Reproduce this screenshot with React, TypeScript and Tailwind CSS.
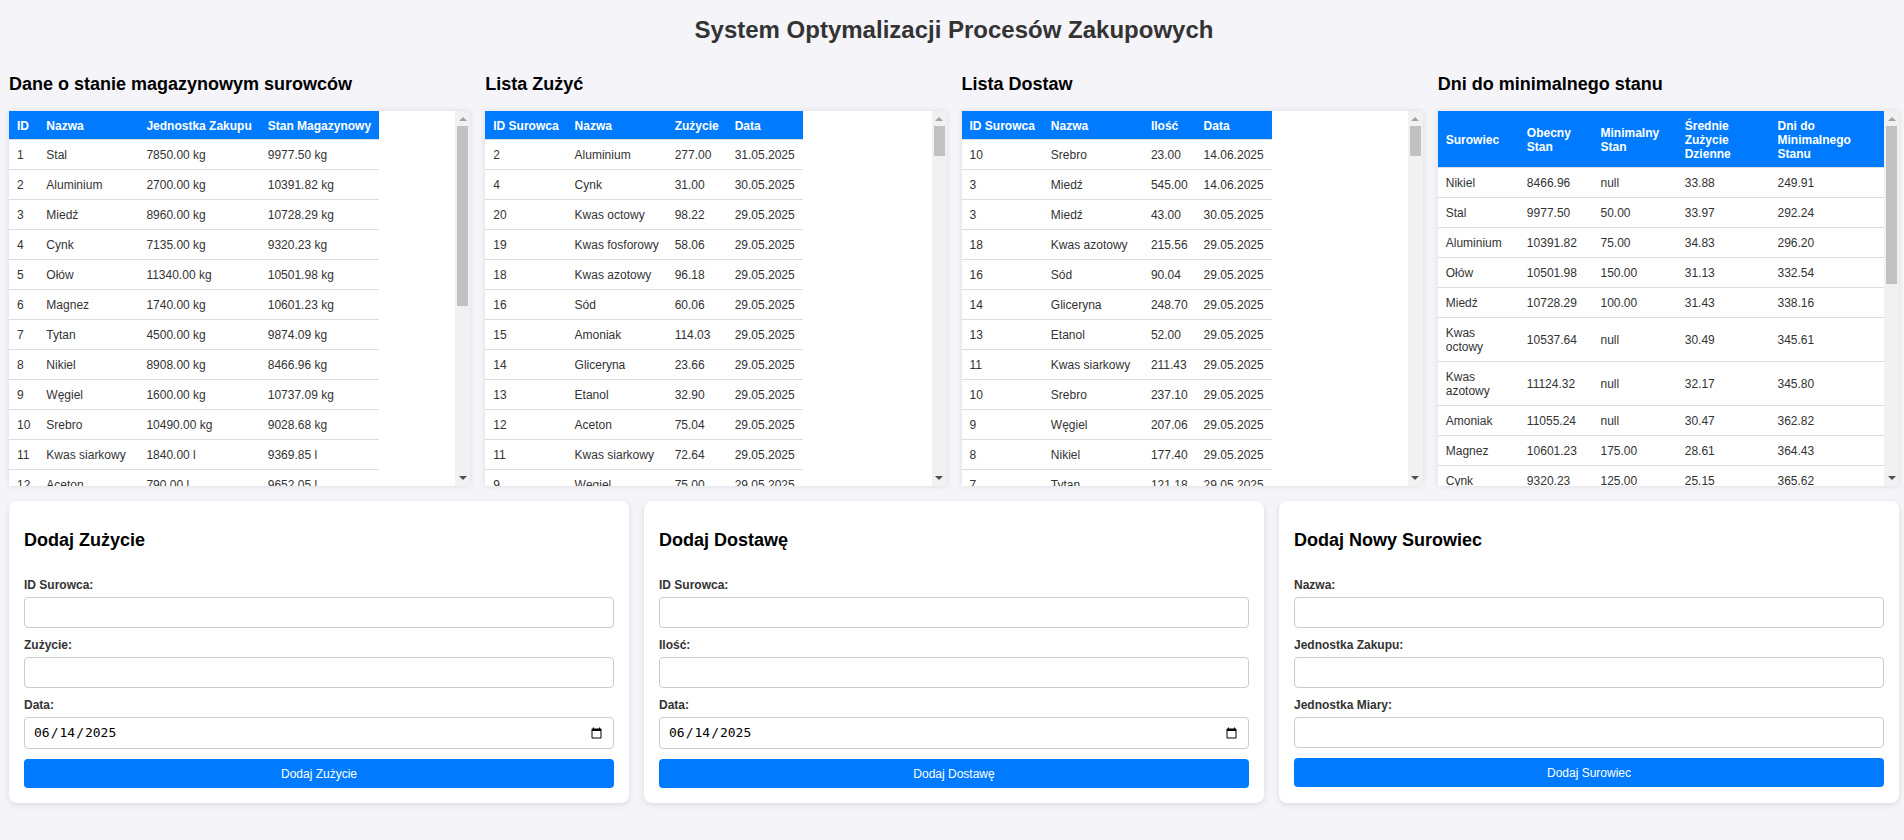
import React from "react";

const materials: [number, string, string, string][] = [
  [1, "Stal", "7850.00 kg", "9977.50 kg"],
  [2, "Aluminium", "2700.00 kg", "10391.82 kg"],
  [3, "Miedź", "8960.00 kg", "10728.29 kg"],
  [4, "Cynk", "7135.00 kg", "9320.23 kg"],
  [5, "Ołów", "11340.00 kg", "10501.98 kg"],
  [6, "Magnez", "1740.00 kg", "10601.23 kg"],
  [7, "Tytan", "4500.00 kg", "9874.09 kg"],
  [8, "Nikiel", "8908.00 kg", "8466.96 kg"],
  [9, "Węgiel", "1600.00 kg", "10737.09 kg"],
  [10, "Srebro", "10490.00 kg", "9028.68 kg"],
  [11, "Kwas siarkowy", "1840.00 l", "9369.85 l"],
  [12, "Aceton", "790.00 l", "9652.05 l"],
  [13, "Etanol", "789.00 l", "10112.40 l"],
  [14, "Gliceryna", "1260.00 l", "9958.31 l"],
  [15, "Amoniak", "682.00 l", "11055.24 l"],
  [16, "Sód", "968.00 kg", "9807.66 kg"],
  [17, "Potas", "862.00 kg", "9712.35 kg"],
  [18, "Kwas azotowy", "1510.00 l", "11124.32 l"],
  [19, "Kwas fosforowy", "1880.00 l", "10233.19 l"],
  [20, "Kwas octowy", "1050.00 l", "10537.64 l"],
  [21, "Siarka", "2070.00 kg", "9540.12 kg"],
  [22, "Fosfor", "1820.00 kg", "9911.08 kg"],
  [23, "Chlor", "3210.00 kg", "10021.44 kg"],
];

const nameOf = (id: number) => materials[id - 1][1];

const fmtDate = (d: Date) =>
  `${String(d.getDate()).padStart(2, "0")}.${String(d.getMonth() + 1).padStart(2, "0")}.${d.getFullYear()}`;

const zuzyciaVisible: [number, string, string][] = [
  [2, "277.00", "31.05.2025"],
  [4, "31.00", "30.05.2025"],
  [20, "98.22", "29.05.2025"],
  [19, "58.06", "29.05.2025"],
  [18, "96.18", "29.05.2025"],
  [16, "60.06", "29.05.2025"],
  [15, "114.03", "29.05.2025"],
  [14, "23.66", "29.05.2025"],
  [13, "32.90", "29.05.2025"],
  [12, "75.04", "29.05.2025"],
  [11, "72.64", "29.05.2025"],
  [9, "75.00", "29.05.2025"],
];

const dostawyVisible: [number, string, string][] = [
  [10, "23.00", "14.06.2025"],
  [3, "545.00", "14.06.2025"],
  [3, "43.00", "30.05.2025"],
  [18, "215.56", "29.05.2025"],
  [16, "90.04", "29.05.2025"],
  [14, "248.70", "29.05.2025"],
  [13, "52.00", "29.05.2025"],
  [11, "211.43", "29.05.2025"],
  [10, "237.10", "29.05.2025"],
  [9, "207.06", "29.05.2025"],
  [8, "177.40", "29.05.2025"],
  [7, "121.18", "29.05.2025"],
];

function gen(
  visible: [number, string, string][],
  count: number,
  mult: number,
  range: number
): [number, string, string, string][] {
  const out: [number, string, string, string][] = visible.map(([id, v, d]) => [id, nameOf(id), v, d]);
  for (let i = 0; i < count; i++) {
    const id = ((i * 7) % 23) + 1;
    const val = (10 + ((i * mult) % range)).toFixed(2);
    const d = new Date(2025, 4, 28 - Math.floor(i / 6));
    out.push([id, nameOf(id), val, fmtDate(d)]);
  }
  return out;
}

const zuzycia = gen(zuzyciaVisible, 128, 47.37, 110);
const dostawy = gen(dostawyVisible, 128, 83.91, 280);

const dni: [string, string, string, string, string][] = [
  ["Nikiel", "8466.96", "null", "33.88", "249.91"],
  ["Stal", "9977.50", "50.00", "33.97", "292.24"],
  ["Aluminium", "10391.82", "75.00", "34.83", "296.20"],
  ["Ołów", "10501.98", "150.00", "31.13", "332.54"],
  ["Miedź", "10728.29", "100.00", "31.43", "338.16"],
  ["Kwas octowy", "10537.64", "null", "30.49", "345.61"],
  ["Kwas azotowy", "11124.32", "null", "32.17", "345.80"],
  ["Amoniak", "11055.24", "null", "30.47", "362.82"],
  ["Magnez", "10601.23", "175.00", "28.61", "364.43"],
  ["Cynk", "9320.23", "125.00", "25.15", "365.62"],
  ["Tytan", "9874.09", "null", "26.71", "369.68"],
  ["Srebro", "9028.68", "null", "24.21", "372.93"],
  ["Kwas siarkowy", "9369.85", "null", "24.87", "376.75"],
  ["Węgiel", "10737.09", "null", "28.06", "382.65"],
  ["Aceton", "9652.05", "null", "24.93", "387.17"],
  ["Etanol", "10112.40", "null", "25.74", "392.87"],
  ["Gliceryna", "9958.31", "null", "24.86", "400.58"],
  ["Sód", "9807.66", "null", "23.97", "409.16"],
  ["Potas", "9712.35", "null", "22.84", "425.23"],
  ["Kwas fosforowy", "10233.19", "null", "23.61", "433.42"],
  ["Siarka", "9540.12", "null", "21.37", "446.43"],
  ["Fosfor", "9911.08", "null", "20.95", "473.08"],
  ["Chlor", "10021.44", "null", "19.82", "505.63"],
];

function DataTable({ headers, rows, full }: { headers: string[]; rows: (string | number)[][]; full?: boolean }) {
  return (
    <table className={`border-separate border-spacing-0 text-[12px] ${full ? "w-full" : ""}`}>
      <thead>
        <tr>
          {headers.map((h) => (
            <th
              key={h}
              className="bg-[#007bff] text-white font-bold text-left align-middle px-2 pt-2 pb-[6px] leading-[14px] border-b border-[#ddd]"
            >
              {h}
            </th>
          ))}
        </tr>
      </thead>
      <tbody>
        {rows.map((r, i) => (
          <tr key={i}>
            {r.map((c, j) => (
              <td
                key={j}
                className="text-[#333] text-left align-middle px-2 pt-2 pb-[7px] leading-[14px] border-b border-[#ddd]"
              >
                {c}
              </td>
            ))}
          </tr>
        ))}
      </tbody>
    </table>
  );
}

function Scrollbar({ thumbCls }: { thumbCls: string }) {
  return (
    <div className="w-[15px] shrink-0 bg-[#f1f1f1] flex flex-col">
      <div className="h-[15px] flex items-start justify-center pt-[6px]">
        <svg width="8" height="4" viewBox="0 0 8 4">
          <polygon points="0,4 4,0 8,4" fill="#a3a3a3" />
        </svg>
      </div>
      <div className="flex-1 px-[2px]">
        <div className={`bg-[#c1c1c1] ${thumbCls}`} />
      </div>
      <div className="h-[15px] flex items-start justify-center pt-[5px]">
        <svg width="8" height="4" viewBox="0 0 8 4">
          <polygon points="0,0 8,0 4,4" fill="#505050" />
        </svg>
      </div>
    </div>
  );
}

function Section({ title, thumbCls, children }: { title: string; thumbCls: string; children: React.ReactNode }) {
  return (
    <div className="min-w-0">
      <h2 className="text-[18px] font-bold leading-[21px] text-black mb-[16px] whitespace-nowrap">{title}</h2>
      <div className="h-[375px] bg-white shadow-[0_0_6px_rgba(0,0,0,0.1)] flex">
        <div className="flex-1 min-w-0 overflow-hidden">{children}</div>
        <Scrollbar thumbCls={thumbCls} />
      </div>
    </div>
  );
}

function Field({ label, type = "text" }: { label: string; type?: string }) {
  return (
    <div className="mb-[10px]">
      <label className="block text-[12px] font-bold leading-[14px] text-[#333] mb-[5px]">{label}</label>
      {type === "date" ? (
        <input
          type="date"
          defaultValue="2025-06-14"
          className="block w-full h-[32px] px-2 border border-[#ccc] rounded-[4px] bg-white text-black text-[13px] font-['DejaVu_Sans_Mono',monospace]"
        />
      ) : (
        <input
          type="text"
          className="block w-full h-[31px] px-2 border border-[#ccc] rounded-[4px] bg-white text-black text-[12px]"
        />
      )}
    </div>
  );
}

function Card({ title, fields, button }: { title: string; fields: [string, string?][]; button: string }) {
  return (
    <div className="bg-white rounded-[8px] shadow-[0_2px_6px_rgba(0,0,0,0.1)] px-[15px] pt-[29px] pb-[15px]">
      <h2 className="text-[18px] font-bold leading-[21px] text-black mb-[27px]">{title}</h2>
      {fields.map(([l, t]) => (
        <Field key={l} label={l} type={t} />
      ))}
      <button className="mt-[3px] block w-full h-[29px] rounded-[4px] bg-[#007bff] text-white text-[12px] leading-[14px]">
        {button}
      </button>
    </div>
  );
}

export default function App() {
  return (
    <div className="min-h-screen bg-[#f4f4f9] font-['Liberation_Sans',Arial,sans-serif] text-[12px] text-[#333] pl-[9px] pr-[5px]">
      <h1 className="pt-[16px] text-center text-[24px] font-bold leading-[28px] text-[#333]">
        System Optymalizacji Procesów Zakupowych
      </h1>
      <div className="grid grid-cols-4 gap-[15px] mt-[30px]">
        <Section title="Dane o stanie magazynowym surowców" thumbCls="h-[180px]">
          <DataTable headers={["ID", "Nazwa", "Jednostka Zakupu", "Stan Magazynowy"]} rows={materials} />
        </Section>
        <Section title="Lista Zużyć" thumbCls="h-[30px]">
          <DataTable headers={["ID Surowca", "Nazwa", "Zużycie", "Data"]} rows={zuzycia} />
        </Section>
        <Section title="Lista Dostaw" thumbCls="h-[30px]">
          <DataTable headers={["ID Surowca", "Nazwa", "Ilość", "Data"]} rows={dostawy} />
        </Section>
        <Section title="Dni do minimalnego stanu" thumbCls="h-[158px]">
          <DataTable
            full
            headers={["Surowiec", "Obecny Stan", "Minimalny Stan", "Średnie Zużycie Dzienne", "Dni do Minimalnego Stanu"]}
            rows={dni}
          />
        </Section>
      </div>
      <div className="grid grid-cols-3 gap-[15px] mt-[15px]">
        <Card
          title="Dodaj Zużycie"
          fields={[["ID Surowca:"], ["Zużycie:"], ["Data:", "date"]]}
          button="Dodaj Zużycie"
        />
        <Card
          title="Dodaj Dostawę"
          fields={[["ID Surowca:"], ["Ilość:"], ["Data:", "date"]]}
          button="Dodaj Dostawę"
        />
        <Card
          title="Dodaj Nowy Surowiec"
          fields={[["Nazwa:"], ["Jednostka Zakupu:"], ["Jednostka Miary:"]]}
          button="Dodaj Surowiec"
        />
      </div>
    </div>
  );
}
